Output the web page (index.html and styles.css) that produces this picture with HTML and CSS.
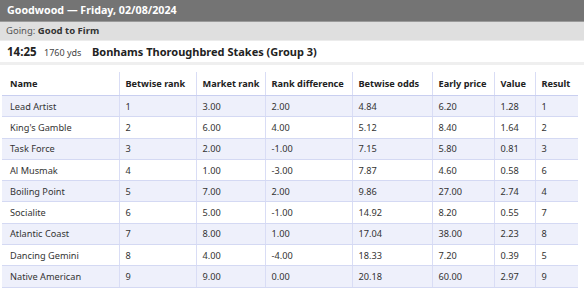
FILE: index.html
```html
<!DOCTYPE html>
<html>
<head>
<meta charset="utf-8">
<link rel="stylesheet" href="styles.css">
</head>
<body>
<div class="meeting">Goodwood — Friday, 02/08/2024</div>
<div class="going">Going: <b>Good to Firm</b></div>
<div class="race">
  <span class="time">14:25</span>
  <span class="dist">1760 yds</span>
  <span class="title">Bonhams Thoroughbred Stakes (Group 3)</span>
</div>
<div class="wrap">
<table class="runners">
  <colgroup>
    <col class="c1"><col class="c2"><col class="c3"><col class="c4"><col class="c5"><col class="c6"><col class="c7"><col class="c8">
  </colgroup>
  <thead>
    <tr><th>Name</th><th>Betwise rank</th><th>Market rank</th><th>Rank difference</th><th>Betwise odds</th><th>Early price</th><th>Value</th><th>Result</th></tr>
  </thead>
  <tbody>
    <tr><td>Lead Artist</td><td>1</td><td>3.00</td><td>2.00</td><td>4.84</td><td>6.20</td><td>1.28</td><td>1</td></tr>
    <tr><td>King's Gamble</td><td>2</td><td>6.00</td><td>4.00</td><td>5.12</td><td>8.40</td><td>1.64</td><td>2</td></tr>
    <tr><td>Task Force</td><td>3</td><td>2.00</td><td>-1.00</td><td>7.15</td><td>5.80</td><td>0.81</td><td>3</td></tr>
    <tr><td>Al Musmak</td><td>4</td><td>1.00</td><td>-3.00</td><td>7.87</td><td>4.60</td><td>0.58</td><td>6</td></tr>
    <tr><td>Boiling Point</td><td>5</td><td>7.00</td><td>2.00</td><td>9.86</td><td>27.00</td><td>2.74</td><td>4</td></tr>
    <tr><td>Socialite</td><td>6</td><td>5.00</td><td>-1.00</td><td>14.92</td><td>8.20</td><td>0.55</td><td>7</td></tr>
    <tr><td>Atlantic Coast</td><td>7</td><td>8.00</td><td>1.00</td><td>17.04</td><td>38.00</td><td>2.23</td><td>8</td></tr>
    <tr><td>Dancing Gemini</td><td>8</td><td>4.00</td><td>-4.00</td><td>18.33</td><td>7.20</td><td>0.39</td><td>5</td></tr>
    <tr><td>Native American</td><td>9</td><td>9.00</td><td>0.00</td><td>20.18</td><td>60.00</td><td>2.97</td><td>9</td></tr>
  </tbody>
</table>
</div>
</body>
</html>
```

FILE: styles.css
```css
html, body {
  margin: 0;
  padding: 0;
  background: #ffffff;
  font-family: "Noto Sans", "Open Sans", sans-serif;
  color: #222;
}
.meeting {
  background: #747474;
  color: #ffffff;
  font-weight: 700;
  font-size: 10.7px;
  height: 21px;
  line-height: 21px;
  padding-left: 7px;
  border-bottom: 1px solid #9a9a9a;
}
.going {
  background: #dfdfdf;
  color: #555;
  font-size: 9.5px;
  height: 18px;
  line-height: 18px;
  padding-left: 6px;
  border-bottom: 1px solid #ececec;
}
.going b {
  color: #333;
  font-weight: 700;
}
.race {
  display: flex;
  align-items: baseline;
  height: 21px;
  line-height: 21px;
  padding-left: 7px;
  border-bottom: 3px solid #efefef;
}
.time {
  font-weight: 700;
  font-size: 11.5px;
  width: 37px;
  color: #222;
}
.dist {
  font-size: 9px;
  color: #444;
  width: 48px;
}
.title {
  font-weight: 700;
  font-size: 11px;
  color: #222;
}
.wrap {
  padding: 7px 6px 0 2px;
}
.runners {
  width: 576px;
  table-layout: fixed;
  border-collapse: collapse;
  font-size: 9.2px;
}
.c1 { width: 117px; }
.c2 { width: 77px; }
.c3 { width: 69px; }
.c4 { width: 87px; }
.c5 { width: 80px; }
.c6 { width: 62px; }
.c7 { width: 41px; }
.c8 { width: 43px; }
.runners th {
  text-align: left;
  font-weight: 700;
  color: #222;
  height: 23px;
  padding: 0 0 0 6px;
  white-space: nowrap;
  border-left: 1px solid #d9ddf5;
  border-bottom: 1px solid #c9cff0;
}
.runners td {
  color: #333;
  height: 20.3px;
  padding: 0 0 0 6px;
  white-space: nowrap;
  border-left: 1px solid #d9ddf5;
  border-bottom: 1px solid #d4d9f3;
}
.runners th:first-child,
.runners td:first-child {
  border-left: none;
  padding-left: 8px;
}
.runners tbody tr:nth-child(odd) td {
  background: #eef0fb;
}
```
